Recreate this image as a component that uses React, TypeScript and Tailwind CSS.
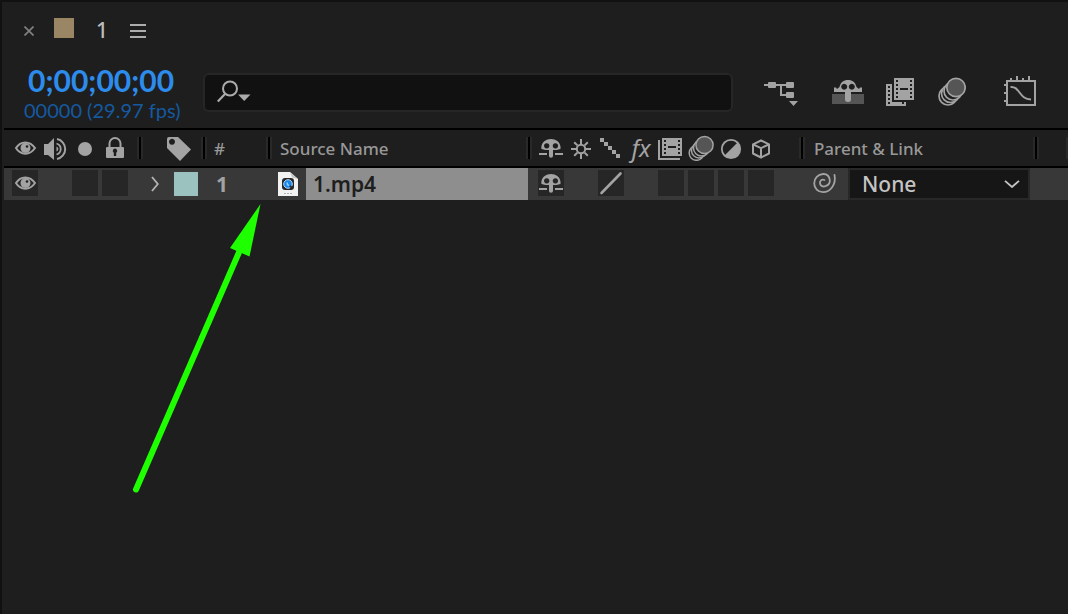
import React, { useState } from 'react';
import clsx from 'clsx';

const GRID = 'grid grid-cols-[139px_64px_65px_minmax(0,1fr)_273px_234px_29px]';

interface IconProps {
  className?: string;
}

// ----------------- Icons -----------------
const EyeIcon: React.FC<IconProps> = ({ className }) => (
  <svg className={clsx('w-[26px] h-[26px]', className)} viewBox="0 0 26 26" fill="none">
    <path d="M4 13C8.5 5.500 18 5.500 23 13C18 20.500 8.5 20.500 4 13Z" stroke="currentColor" strokeWidth="2" />
    <circle cx="13.5" cy="13" r="5" fill="currentColor" />
    <circle cx="15" cy="11.500" r="1.3" fill="#222" />
  </svg>
);

const SpeakerIcon = () => (
  <svg className="w-[26px] h-[26px]" viewBox="0 0 26 26" fill="none">
    <path d="M2 9H6L12 3V25L6 20H2Z" fill="currentColor" />
    <path d="M14.500 11.500A2.600 2.600 0 0 1 14.500 16.500Z" fill="currentColor" />
    <path d="M14.500 8.500A5.700 5.700 0 0 1 14.500 19.500" stroke="currentColor" strokeWidth="1.800" />
    <path d="M15 4A10.2 10.2 0 0 1 15 24" stroke="currentColor" strokeWidth="2" />
  </svg>
);

const SoloIcon = () => (
  <svg className="w-[26px] h-[26px]" viewBox="0 0 26 26">
    <circle cx="13" cy="14" r="7" fill="currentColor" />
  </svg>
);

const LockIcon = () => (
  <svg className="w-[26px] h-[26px]" viewBox="0 0 26 26" fill="none">
    <path d="M7.5 12V8.5a5.5 5.5 0 0 1 11 0V12" stroke="currentColor" strokeWidth="2" />
    <rect x="4" y="12" width="18" height="11" rx="1" fill="currentColor" />
    <path d="M13 13.5a2.3 2.3 0 0 1 1.2 4.2V21h-2.4v-3.3A2.3 2.3 0 0 1 13 13.5Z" fill="#1e1e1e" />
  </svg>
);

const TagIcon = () => (
  <svg className="w-[26px] h-[26px]" viewBox="0 0 26 26">
    <path
      fillRule="evenodd"
      d="M1 4Q1 2 3 2H12L25 14.5L14 26L1 13ZM6 3.700a3 3 0 1 0 .01 0Z"
      fill="currentColor"
    />
  </svg>
);

const ShyIcon = () => (
  <svg className="w-[26px] h-[26px]" viewBox="0 0 26 26">
    <path
      fillRule="evenodd"
      d="M3.4 14V11.5C4.3 6.8 8 4 13 4S21.7 6.8 22.5 11.5V14L18.500 15H15V21Q15 22.8 13 22.8T11 21V15H7.500ZM8.7 8.2a2.7 2.7 0 1 0 .01 0ZM17.4 8.2a2.7 2.7 0 1 0 .01 0Z"
      fill="currentColor"
    />
    <path d="M1 18h8v2H1zM17 18h8v2H17z" fill="currentColor" />
  </svg>
);

const SunIcon = () => (
  <svg className="w-[26px] h-[26px]" viewBox="0 0 26 26" fill="none" stroke="currentColor" strokeWidth="2">
    <circle cx="13" cy="14" r="4.2" />
    <path d="M13 4v5M13 19v5M3 14h5M18 14h5M6.2 7.2l3.2 3.2M16.6 17.6l3.2 3.2M19.8 7.2l-3.2 3.2M9.4 17.6l-3.2 3.2" />
  </svg>
);

const QualityIcon = () => (
  <svg className="w-[26px] h-[26px]" viewBox="0 0 26 26">
    <path d="M2 3h4v4H2zM6 7h4v4H6zM10 11h4v4h-4zM14 15h4v4h-4zM18 19h4v4h-4z" fill="currentColor" />
  </svg>
);

const FrameIcon = () => (
  <svg className="w-[26px] h-[26px]" viewBox="0 0 26 26">
    <path d="M0 5h2v18h20v2H0z" fill="currentColor" />
    <rect x="4" y="3" width="20" height="18" fill="currentColor" />
    <path
      d="M6 5h2v2H6zM6 9h2v2H6zM6 13h2v2H6zM6 17h2v2H6zM20 5h2v2h-2zM20 9h2v2h-2zM20 13h2v2h-2zM20 17h2v2h-2zM10 11h8v2h-8z"
      fill="#1e1e1e"
    />
  </svg>
);

const BlurIcon = () => (
  <svg className="w-[26px] h-[26px]" viewBox="0 0 26 26" stroke="currentColor" strokeWidth="1.5" fill="#1e1e1e">
    <circle cx="8.5" cy="18" r="7.300" />
    <circle cx="11" cy="15.5" r="7.5" />
    <circle cx="13.500" cy="13" r="8" />
    <circle cx="16.5" cy="10" r="8.6" fill="#555" />
  </svg>
);

const AdjustIcon = () => (
  <svg className="w-[26px] h-[26px]" viewBox="0 0 26 26" fill="none">
    <circle cx="13" cy="14" r="9.2" stroke="currentColor" strokeWidth="1.8" />
    <path d="M19.5 7.5A9.2 9.2 0 0 1 6.5 20.5Z" fill="currentColor" />
  </svg>
);

const CubeIcon = () => (
  <svg className="w-[26px] h-[26px]" viewBox="0 0 26 26" fill="none" stroke="currentColor" strokeWidth="2" strokeLinejoin="round">
    <path d="M13 5.5L21 9.3V18.5L13 22.5L5 18.5V9.3ZM5 9.3L13 13.2L21 9.3M13 13.2V22.5" />
  </svg>
);

const SlashIcon = () => (
  <svg className="w-[26px] h-[26px]" viewBox="0 0 26 26">
    <path d="M3.5 23L22.5 3.5" stroke="currentColor" strokeWidth="2.6" strokeLinecap="round" />
  </svg>
);

const SpiralIcon = () => (
  <svg className="w-[26px] h-[26px]" viewBox="0 0 26 26" fill="none" stroke="currentColor" strokeWidth="1.8" strokeLinecap="round">
    <path d="M13.500 10C10.500 9 8.500 11 9 13.500C9.500 16 12 17 14.500 16.200C17.500 15.200 19.200 13 18.800 10C18.200 6 15.500 3.800 12 4C7 4.300 3.200 8.500 3.200 13.200C3.200 18.500 7 22.200 12 22.200C19 22.200 25.500 14.500 23.500 5" />
  </svg>
);

const FlowchartIcon = () => (
  <svg className="w-[34px] h-8" viewBox="0 -2 34 32" fill="currentColor">
    <path d="M0 6h22v2H0zM16 7h2v9h5v2h-7z" />
    <rect x="4" y="4" width="8" height="6" rx="1" />
    <rect x="22" y="4" width="8" height="6" rx="1" />
    <rect x="22" y="14" width="8" height="6" rx="1" />
    <path d="M25 23h9l-4.500 5z" />
  </svg>
);

const HideShyIcon = () => (
  <svg className="w-8 h-8" viewBox="0 -2 32 32">
    <rect x="0" y="16" width="32" height="10" fill="#555" />
    <path
      fillRule="evenodd"
      d="M2 9.500L4 9.500L5 11L7.500 9C8.500 4.500 11.500 2 16 2S23.500 4.500 24.500 9L27 11L28 9.500H30V14H19V21.500Q19 24 16 24T13 21.500V14H2ZM12.200 5.800a3 3 0 1 0 .01 0ZM19.800 5.800a3 3 0 1 0 .01 0Z"
      fill="currentColor"
    />
  </svg>
);

const FrameBlendIcon = () => (
  <svg className="w-7 h-8" viewBox="0 0 28 32">
    <path d="M0 8h6v18h14v4H0z" fill="currentColor" />
    <path d="M2 10h2v2H2zM2 14h2v2H2zM2 18h2v2H2zM2 22h2v2H2zM2 26h2v2H2zM6 24h10v2H6zM16 26h2v2h-2z" fill="#1e1e1e" />
    <rect x="8" y="2" width="20" height="22" fill="currentColor" />
    <path
      d="M10 4h2v2h-2zM10 8h2v2h-2zM10 12h2v2h-2zM10 16h2v2h-2zM10 20h2v2h-2zM24 4h2v2h-2zM24 8h2v2h-2zM24 12h2v2h-2zM24 16h2v2h-2zM24 20h2v2h-2zM14 12h8v2h-8z"
      fill="#1e1e1e"
    />
  </svg>
);

const MotionBlurIcon = () => (
  <svg className="w-7 h-8" viewBox="0 0 28 32" stroke="currentColor" strokeWidth="1.7" fill="#1e1e1e">
    <circle cx="10" cy="20" r="9" />
    <circle cx="12.500" cy="17.500" r="9" />
    <circle cx="15" cy="15" r="9" />
    <circle cx="18" cy="11.500" r="9.200" fill="#555" />
  </svg>
);

const GraphIcon = () => (
  <svg className="w-8 h-8" viewBox="0 0 32 32" fill="none" stroke="currentColor" strokeWidth="2">
    <rect x="3" y="5" width="28" height="24" />
    <path d="M7 2v3M13 0v5M19 2v3M25 0v5M0 9h3M0 17h3M0 25h3" />
    <path d="M6.500 11C16 10 15 23.500 27 23.500" />
  </svg>
);

const FileIcon = () => (
  <svg className="w-5 h-6" viewBox="0 0 20 24">
    <path d="M0 0H12L20 7V24H0Z" fill="#f2f2f2" />
    <path d="M12 0L14 5.500L20 7Z" fill="#c9c9c9" />
    <rect x="4" y="6" width="12" height="12" rx="3" fill="#26282c" />
    <circle cx="10" cy="12" r="4.300" fill="#1b86ea" stroke="#b9d4ee" strokeWidth="1" />
    <path d="M9.500 10.500a2 2 0 0 0 1.500 3" stroke="#8fd4ff" strokeWidth="1.500" fill="none" />
    <path d="M12 14l2.500 2.500" stroke="#26282c" strokeWidth="1.800" />
    <path d="M6 21.500h2M9 21.500h2M12 21.500h2" stroke="#b5b5b5" strokeWidth="1.200" />
  </svg>
);

// ----------------- Parts -----------------
const Divider = () => <span className="w-1.5 h-[22px] shrink-0 border-x-2 border-[#292929] bg-black" />;

interface HeaderCellProps {
  className?: string;
  children?: React.ReactNode;
}

const HeaderCell: React.FC<HeaderCellProps> = ({ className, children }) => (
  <div className="flex items-center justify-between">
    <div className={clsx('flex items-center', className)}>{children}</div>
    <Divider />
  </div>
);

interface SwitchCellProps {
  label: string;
  empty?: boolean;
  children?: React.ReactNode;
}

const SwitchCell: React.FC<SwitchCellProps> = ({ label, empty, children }) => (
  <button aria-label={label} className={clsx('w-[26px] h-[26px]', !empty && 'bg-[#262626]')}>
    {children}
  </button>
);

const App: React.FC = () => {
  const [query, setQuery] = useState('');
  const [parent, setParent] = useState('None');

  return (
    <main className="relative min-h-screen border-t-2 border-l-2 border-[#111] bg-[#1e1e1e] pl-0.5 font-['Noto_Sans',sans-serif] text-[#a3a3a3]">
      {/* Tab */}
      <div className="flex h-14 items-center pt-0.5 pl-5">
        <button aria-label="Close tab" className="w-2.5">
          <svg className="w-2.5 h-2.5" viewBox="0 0 10 10">
            <path d="M.5.5l9 9M9.500.5l-9 9" stroke="#808080" strokeWidth="1.700" />
          </svg>
        </button>
        <span className="ml-5 mb-1.5 h-5 w-5 bg-[#9a8565]" />
        <span className="ml-[22px] text-[21px] font-medium text-[#bdbdbd]">1</span>
        <button aria-label="Panel menu" className="ml-[22px] w-4">
          <svg className="w-4 h-3.5" viewBox="0 0 16 14" fill="#adadad">
            <path d="M0 0h16v2H0zM0 6h16v2H0zM0 12h16v2H0z" />
          </svg>
        </button>
      </div>

      {/* Timecode, search and switches */}
      <div className="flex h-[70px] items-center pr-8 pb-0.5">
        <div className="w-[199px] shrink-0 pl-5">
          <div className="pl-1 font-['Lato',sans-serif] text-[30px] leading-9 font-bold text-[#2d8ceb]">0;00;00;00</div>
          <div className="font-['Lato',sans-serif] text-[20px] leading-6 text-[#1559a0]">00000 (29.97 fps)</div>
        </div>
        <label className="flex h-[39px] min-w-0 flex-1 items-center rounded-md border-2 border-[#262626] bg-[#111] pl-3">
          <svg className="h-6 w-9 shrink-0" viewBox="0 0 36 24" fill="none">
            <circle cx="13" cy="8.500" r="7" stroke="#ababab" strokeWidth="2" />
            <path d="M8 14L.8 21.500" stroke="#ababab" strokeWidth="2.200" />
            <path d="M21 14.500h12.500L27.200 21z" fill="#ababab" />
          </svg>
          <input
            type="text"
            aria-label="Search layers"
            value={query}
            onChange={(e) => setQuery(e.target.value)}
            className="min-w-0 flex-1 bg-transparent text-[17px] text-[#bdbdbd] outline-none"
          />
        </label>
        <button aria-label="Mini-flowchart" className="ml-[31px]"><FlowchartIcon /></button>
        <button aria-label="Hide shy layers" className="ml-[34px]"><HideShyIcon /></button>
        <button aria-label="Frame blending" className="ml-[22px]"><FrameBlendIcon /></button>
        <button aria-label="Motion blur" className="ml-6"><MotionBlurIcon /></button>
        <button aria-label="Graph editor" className="ml-[38px]"><GraphIcon /></button>
      </div>

      {/* Column headers */}
      <div className={clsx(GRID, 'h-10 border-y-2 border-black text-[17px] font-medium text-[#989898]')}>
        <HeaderCell className="gap-1 pl-2 text-[#a3a3a3]">
          <EyeIcon />
          <SpeakerIcon />
          <SoloIcon />
          <LockIcon />
        </HeaderCell>
        <HeaderCell className="pl-[23px] text-[#a3a3a3]"><TagIcon /></HeaderCell>
        <HeaderCell className="pt-0.5 pl-[7px]">#</HeaderCell>
        <HeaderCell className="pt-0.5 pl-2">Source Name</HeaderCell>
        <HeaderCell className="gap-1 pl-1.5 text-[#a3a3a3]">
          <ShyIcon />
          <SunIcon />
          <QualityIcon />
          <span className="w-[26px] text-center text-[24px] leading-6 font-normal italic">fx</span>
          <FrameIcon />
          <BlurIcon />
          <AdjustIcon />
          <CubeIcon />
        </HeaderCell>
        <HeaderCell className="pt-0.5 pl-[9px]">Parent &amp; Link</HeaderCell>
        <div className="flex items-center justify-end">
          <span className="h-[22px] w-0.5 bg-[#292929]" />
        </div>
      </div>

      {/* Layer */}
      <div className={clsx(GRID, 'h-8 bg-[#383838]')}>
        <div className="flex gap-1 pt-0.5 pl-2">
          <SwitchCell label="Video"><EyeIcon /></SwitchCell>
          <SwitchCell label="Audio" empty />
          <SwitchCell label="Solo" />
          <SwitchCell label="Lock" />
        </div>
        <div className="flex items-center pl-2">
          <button aria-label="Expand layer" className="w-[23px]">
            <svg className="w-2 h-4" viewBox="0 0 8 16" fill="none">
              <path d="M1 1L6.800 8L1 15" stroke="#b5b5b5" strokeWidth="1.800" />
            </svg>
          </button>
          <button aria-label="Label colour" className="h-6 w-6 bg-[#9bc2be]" />
        </div>
        <div className="flex items-center pl-[9px] text-[21px] leading-8 font-bold">1</div>
        <div className="flex items-center pr-1 pl-1.5">
          <FileIcon />
          <span className="ml-2 h-8 flex-1 bg-[#8e8e8e] pl-[7px] text-[21px] leading-8 font-semibold text-[#1e1e1e]">
            1.mp4
          </span>
        </div>
        <div className="flex gap-1 pt-0.5 pl-1.5">
          <SwitchCell label="Shy"><ShyIcon /></SwitchCell>
          <SwitchCell label="Collapse" empty />
          <SwitchCell label="Quality"><SlashIcon /></SwitchCell>
          <SwitchCell label="Effects" empty />
          <SwitchCell label="Frame blend" />
          <SwitchCell label="Blur" />
          <SwitchCell label="Adjustment" />
          <SwitchCell label="3D layer" />
        </div>
        <div className="flex items-start pl-1.5">
          <button aria-label="Parent pick whip" className="w-[37px] pt-0.5"><SpiralIcon /></button>
          <div className="relative h-8 w-[182px]">
            <select
              aria-label="Parent"
              value={parent}
              onChange={(e) => setParent(e.target.value)}
              className="h-8 w-full appearance-none border-2 border-[#282828] bg-[#161616] pl-3 text-[21px] leading-7 font-medium text-[#c4c4c4] outline-none"
            >
              <option>None</option>
            </select>
            <svg className="pointer-events-none absolute top-3 right-2.5 h-2 w-4" viewBox="0 0 16 8" fill="none">
              <path d="M1 .8L8 7L15 .8" stroke="#c4c4c4" strokeWidth="1.800" />
            </svg>
          </div>
        </div>
        <div />
      </div>

      {/* Pointer arrow */}
      <svg className="pointer-events-none absolute top-[198px] left-[128px] h-[300px] w-[140px]" viewBox="130 200 140 300">
        <path d="M136 489.500L240 250" stroke="#1eff00" strokeWidth="6" strokeLinecap="round" />
        <path d="M260.500 204L230 248L249.500 256.500Z" fill="#1eff00" />
      </svg>
    </main>
  );
};

export default App;
